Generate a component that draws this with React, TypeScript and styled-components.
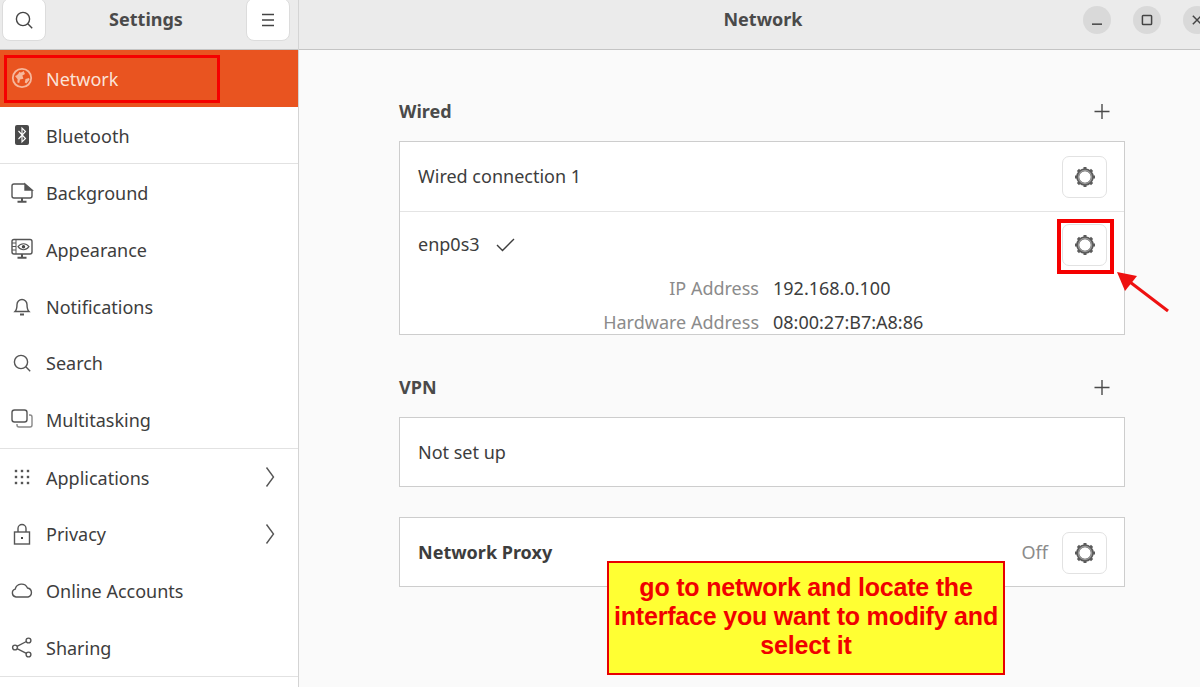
import React from "react";
import styled, { createGlobalStyle } from "styled-components";

const GlobalStyle = createGlobalStyle`
  html, body {
    margin: 0;
    padding: 0;
    width: 1200px;
    height: 687px;
    overflow: hidden;
    background: #fafafa;
  }
`;

const TEXT = "#3d3d3d";
const FONT = `"Noto Sans", "Open Sans", sans-serif`;

const Glyph = styled.svg<{ $size?: number }>`
  width: ${({ $size }) => $size ?? 24}px;
  height: ${({ $size }) => $size ?? 24}px;
  flex: none;
  fill: none;
  stroke: currentColor;
  stroke-width: 1.4;
`;

const SearchIcon = () => (
  <Glyph viewBox="0 0 24 24">
    <circle cx="11" cy="11" r="6.6" />
    <path d="M15.8 15.8l4.4 4.4" />
  </Glyph>
);
const MenuIcon = () => (
  <Glyph viewBox="0 0 24 24">
    <path d="M6 6.5h12M6 12h12M6 17.5h12" />
  </Glyph>
);
const GlobeIcon = () => (
  <Glyph viewBox="0 0 24 24" style={{ color: "#f6b79c" }}>
    <circle cx="12" cy="12" r="9.2" strokeWidth="1.8" />
    <path
      d="M5 10c2-.6 3.5-2 4.2-4 1.6.8 3.2.3 4.4-1l1.4 3-2.6 1.6 1 3.2-3.4.6-.8 3.6-1.8-.6.2-3.2zM15.5 13l3.5-1 .6 1.6-3.2 4-1.6-1.2z"
      fill="currentColor"
      stroke="none"
    />
  </Glyph>
);
const BluetoothIcon = () => (
  <Glyph viewBox="0 0 24 24">
    <rect x="5" y="2" width="14" height="20" rx="2" fill="#4a4a4a" stroke="none" />
    <path d="M8.5 8l7 7.5-3.5 3.5V5l3.5 3.5-7 7.5" stroke="#fff" strokeWidth="1.1" />
  </Glyph>
);
const BackgroundIcon = () => (
  <Glyph viewBox="0 0 24 24">
    <path d="M15 3H4a2 2 0 0 0-2 2v10a2 2 0 0 0 2 2h16a2 2 0 0 0 2-2V9" />
    <path d="M15 3l7 6h-7z" fill="#555" stroke="#555" />
    <path d="M12 17v3M7.5 20.7h9" strokeWidth="2" />
  </Glyph>
);
const AppearanceIcon = () => (
  <Glyph viewBox="0 0 24 24">
    <rect x="2" y="2.5" width="20" height="14.5" rx="2" />
    <path d="M2 6h4M2 9.5h4M2 13h4M6 3v14" strokeWidth="1" />
    <path d="M8 9.7c3-4 8-4 11 0-3 4-8 4-11 0z" strokeWidth="1.1" />
    <circle cx="13.5" cy="9.7" r="1.7" fill="#444" stroke="none" />
    <path d="M12 17v3M7.5 20.7h9" strokeWidth="2" />
  </Glyph>
);
const BellIcon = () => (
  <Glyph viewBox="0 0 24 24">
    <path d="M5 17.5c2-2 2-4 2-7a5 5 0 0 1 10 0c0 3 0 5 2 7z" />
    <path d="M10 20.5h4" strokeWidth="2" />
  </Glyph>
);
const MultitaskIcon = () => (
  <Glyph viewBox="0 0 24 24">
    <rect x="2" y="3" width="15" height="12" rx="2.5" />
    <path d="M19 8h1a2 2 0 0 1 2 2v8a2 2 0 0 1-2 2H9a2 2 0 0 1-2-2v-1" stroke="#888" />
  </Glyph>
);
const GridIcon = () => (
  <Glyph viewBox="0 0 24 24">
    {[6, 12, 18].map((y) =>
      [6, 12, 18].map((x) => (
        <rect key={`${x}-${y}`} x={x - 1.2} y={y - 1.2} width="2.4" height="2.4" fill="#555" stroke="none" />
      ))
    )}
  </Glyph>
);
const LockIcon = () => (
  <Glyph viewBox="0 0 24 24">
    <rect x="4.5" y="10" width="15" height="12" />
    <path d="M8 10V6.5a4 4 0 0 1 8 0V10" />
    <rect x="11" y="15" width="2" height="2" fill="#444" stroke="none" />
  </Glyph>
);
const CloudIcon = () => (
  <Glyph viewBox="0 0 24 24">
    <path d="M6 18a4 4 0 0 1-.8-7.8A6.5 6.5 0 0 1 17.5 9 4.6 4.6 0 0 1 18 18z" />
  </Glyph>
);
const ShareIcon = () => (
  <Glyph viewBox="0 0 24 24">
    <circle cx="5" cy="12.5" r="2.4" />
    <circle cx="18.5" cy="5.5" r="2.4" />
    <circle cx="18.5" cy="19.5" r="2.4" />
    <path d="M7 11.3l9.4-4.8M7 13.7l9.4 4.7" />
  </Glyph>
);
const ChevronIcon = () => (
  <Glyph viewBox="0 0 24 24" stroke="#808080" strokeWidth="1.2">
    <path d="M9.5 2.5l7 9.5-7 9.5" />
  </Glyph>
);
const PlusIcon = () => (
  <Glyph viewBox="0 0 24 24">
    <path d="M12 5v15M4.5 12.5h15" />
  </Glyph>
);
const CheckIcon = () => (
  <Glyph viewBox="0 0 24 24" strokeWidth="1.8">
    <path d="M3 12l5.5 5.5L20 6" />
  </Glyph>
);
const GearIcon = () => (
  <Glyph viewBox="0 0 24 24">
    <circle cx="12" cy="12" r="7.3" stroke="#5a5a5a" strokeWidth="3" />
    <circle cx="12" cy="12" r="6.6" stroke="#9a9a9a" strokeWidth="1.2" />
    {[0, 45, 90, 135, 180, 225, 270, 315].map((a) => (
      <rect key={a} x="10.5" y="2" width="3" height="2" fill="#5a5a5a" stroke="none" transform={`rotate(${a} 12 12)`} />
    ))}
  </Glyph>
);

const Window = styled.div`
  width: 1227px;
  height: 687px;
  display: flex;
  overflow: hidden;
  font-family: ${FONT};
  font-size: 18px;
  color: ${TEXT};
  background: #fafafa;
`;

const Sidebar = styled.aside`
  width: 298px;
  flex: none;
  border-right: 1px solid #d4d4d4;
  background: #fff;
  display: flex;
  flex-direction: column;
`;

const Header = styled.header`
  height: 49px;
  flex: none;
  display: flex;
  align-items: flex-start;
  background: #ebebeb;
  border-bottom: 1px solid #c4c4c4;
`;

const SidebarHeader = styled(Header)`
  justify-content: space-between;
  padding: 0 8px 0 2px;
`;

const HeaderButton = styled.button`
  width: 44px;
  height: 43px;
  margin-top: -2px;
  padding: 0;
  display: flex;
  align-items: center;
  justify-content: center;
  background: #fff;
  color: #444;
  border: 1px solid #dcdcdc;
  border-radius: 8px;
`;

const Title = styled.h1`
  margin: 0;
  line-height: 39px;
  font-size: 18px;
  font-weight: 700;
  color: #4a4a4a;
`;

const Nav = styled.nav`
  display: flex;
  flex-direction: column;
`;

const NavRow = styled.div<{ $active?: boolean }>`
  height: 56.7px;
  flex: none;
  display: flex;
  align-items: center;
  gap: 12px;
  padding: 0 17px 0 10px;
  background: ${({ $active }) => ($active ? "#e95420" : "transparent")};
  color: ${({ $active }) => ($active ? "#fbe3d8" : "#555")};
`;

const NavLabel = styled.span<{ $active?: boolean }>`
  flex: 1;
  padding-top: 1px;
  color: ${({ $active }) => ($active ? "#fbe3d8" : TEXT)};
`;

const NavDivider = styled.div`
  height: 1px;
  flex: none;
  background: #e2e2e2;
`;

const Main = styled.main`
  flex: 1;
  min-width: 0;
  display: flex;
  flex-direction: column;
`;

const MainHeader = styled(Header)`
  position: relative;
  justify-content: flex-end;
  align-items: center;
  gap: 22px;
  padding-right: 16px;
`;

const CenterTitle = styled(Title)`
  position: absolute;
  left: 0;
  right: 0;
  top: 0;
  text-align: center;
`;

const ControlButton = styled.button`
  width: 28px;
  height: 28px;
  margin-bottom: 10px;
  padding: 0;
  display: flex;
  align-items: center;
  justify-content: center;
  border: none;
  border-radius: 50%;
  background: #d9d9d9;
  color: #444;
`;

const Content = styled.div`
  width: 726px;
  margin-left: 100px;
  padding-top: 50px;
  display: flex;
  flex-direction: column;
`;

const SectionHead = styled.div`
  height: 22px;
  margin-bottom: 19px;
  display: flex;
  align-items: center;
  justify-content: space-between;
  padding-right: 11px;
  font-weight: 700;
  color: #4a4a4a;
`;

const Frame = styled.div<{ $height?: number; $gap?: number }>`
  box-sizing: border-box;
  height: ${({ $height }) => $height ?? 70}px;
  margin-bottom: ${({ $gap }) => $gap ?? 41}px;
  border: 1px solid #cdcdcd;
  background: #fff;
  overflow: hidden;
`;

const Row = styled.div`
  box-sizing: border-box;
  height: 69px;
  display: flex;
  align-items: center;
  gap: 14px;
  padding: 0 17px 0 18px;
  & + & {
    border-top: 1px solid #e4e4e4;
    height: 66px;
  }
`;

const RowLabel = styled.span<{ $bold?: boolean }>`
  flex: ${({ $bold }) => ($bold ? 1 : "none")};
  padding-bottom: 2px;
  font-weight: ${({ $bold }) => ($bold ? 700 : 400)};
`;

const Spacer = styled.div`
  flex: 1;
`;

const GearButton = styled.button`
  width: 45px;
  height: 42px;
  padding: 0;
  display: flex;
  align-items: center;
  justify-content: center;
  background: #fff;
  border: 1px solid #e2e2e2;
  border-radius: 7px;
`;

const Muted = styled.span`
  padding-bottom: 2px;
  color: #8b8b8b;
`;

const Details = styled.dl`
  margin: 0;
  display: grid;
  grid-template-columns: 341px 1fr;
  grid-auto-rows: 22px;
  row-gap: 12px;
  column-gap: 14px;
  padding-left: 18px;
  align-items: center;
`;

const DetailKey = styled.dt`
  text-align: right;
  color: #8b8b8b;
`;

const DetailValue = styled.dd`
  margin: 0;
`;

const Highlight = styled.div<{ $width: number; $height: number; $left: number; $top: number; $line: number }>`
  position: absolute;
  box-sizing: border-box;
  left: ${({ $left }) => $left}px;
  top: ${({ $top }) => $top}px;
  width: ${({ $width }) => $width}px;
  height: ${({ $height }) => $height}px;
  border: ${({ $line }) => $line}px solid #f50000;
`;

const Arrow = styled.svg`
  position: absolute;
  left: 1110px;
  top: 262px;
  width: 70px;
  height: 60px;
`;

const Callout = styled.div`
  position: absolute;
  box-sizing: border-box;
  left: 607px;
  top: 561px;
  width: 398px;
  height: 114px;
  padding-top: 10px;
  border: 2px solid #e80000;
  background: #ffff33;
  color: #f00000;
  font-family: "Liberation Sans", Arial, sans-serif;
  font-size: 25px;
  font-weight: 700;
  line-height: 29px;
  letter-spacing: -0.2px;
  text-align: center;
  white-space: nowrap;
`;

const items = [
  { label: "Network", icon: <GlobeIcon />, active: true },
  { label: "Bluetooth", icon: <BluetoothIcon />, divider: true },
  { label: "Background", icon: <BackgroundIcon /> },
  { label: "Appearance", icon: <AppearanceIcon /> },
  { label: "Notifications", icon: <BellIcon /> },
  { label: "Search", icon: <SearchIcon /> },
  { label: "Multitasking", icon: <MultitaskIcon />, divider: true },
  { label: "Applications", icon: <GridIcon />, more: true },
  { label: "Privacy", icon: <LockIcon />, more: true },
  { label: "Online Accounts", icon: <CloudIcon /> },
  { label: "Sharing", icon: <ShareIcon />, divider: true },
];

const App = () => (
  <>
    <GlobalStyle />
    <Window>
      <Sidebar>
        <SidebarHeader>
          <HeaderButton aria-label="Search">
            <SearchIcon />
          </HeaderButton>
          <Title>Settings</Title>
          <HeaderButton aria-label="Menu">
            <MenuIcon />
          </HeaderButton>
        </SidebarHeader>
        <Nav>
          {items.map((item) => (
            <React.Fragment key={item.label}>
              <NavRow $active={item.active}>
                {item.icon}
                <NavLabel $active={item.active}>{item.label}</NavLabel>
                {item.more && <ChevronIcon />}
              </NavRow>
              {item.divider && <NavDivider />}
            </React.Fragment>
          ))}
        </Nav>
      </Sidebar>
      <Main>
        <MainHeader>
          <CenterTitle>Network</CenterTitle>
          <ControlButton aria-label="Minimize">
            <Glyph viewBox="0 0 24 24" $size={20}>
              <path d="M6 17h12" strokeWidth="1.8" />
            </Glyph>
          </ControlButton>
          <ControlButton aria-label="Maximize">
            <Glyph viewBox="0 0 24 24" $size={20}>
              <rect x="6.5" y="6.5" width="11" height="11" rx="1" strokeWidth="1.8" />
            </Glyph>
          </ControlButton>
          <ControlButton aria-label="Close">
            <Glyph viewBox="0 0 24 24" $size={20}>
              <path d="M7 7l10 10M17 7L7 17" strokeWidth="1.8" />
            </Glyph>
          </ControlButton>
        </MainHeader>
        <Content>
          <SectionHead>
            Wired
            <PlusIcon />
          </SectionHead>
          <Frame $height={194}>
            <Row>
              <RowLabel>Wired connection 1</RowLabel>
              <Spacer />
              <GearButton aria-label="Wired connection 1 settings">
                <GearIcon />
              </GearButton>
            </Row>
            <Row>
              <RowLabel>enp0s3</RowLabel>
              <CheckIcon />
              <Spacer />
              <GearButton aria-label="enp0s3 settings">
                <GearIcon />
              </GearButton>
            </Row>
            <Details>
              <DetailKey>IP Address</DetailKey>
              <DetailValue>192.168.0.100</DetailValue>
              <DetailKey>Hardware Address</DetailKey>
              <DetailValue>08:00:27:B7:A8:86</DetailValue>
            </Details>
          </Frame>
          <SectionHead>
            VPN
            <PlusIcon />
          </SectionHead>
          <Frame $gap={30}>
            <Row>
              <RowLabel>Not set up</RowLabel>
            </Row>
          </Frame>
          <Frame>
            <Row>
              <RowLabel $bold>Network Proxy</RowLabel>
              <Muted>Off</Muted>
              <GearButton aria-label="Network proxy settings">
                <GearIcon />
              </GearButton>
            </Row>
          </Frame>
        </Content>
      </Main>
    </Window>
    <Highlight $left={4} $top={55} $width={216} $height={48} $line={3} />
    <Highlight $left={1057} $top={219} $width={57} $height={55} $line={4} />
    <Arrow viewBox="0 0 70 60">
      <path d="M58 49L16 17" stroke="#ee1111" strokeWidth="3" />
      <path d="M7 10l20 4-12 15z" fill="#ee1111" />
    </Arrow>
    <Callout>
      go to network and locate the
      <br />
      interface you want to modify and
      <br />
      select it
    </Callout>
  </>
);

export default App;
